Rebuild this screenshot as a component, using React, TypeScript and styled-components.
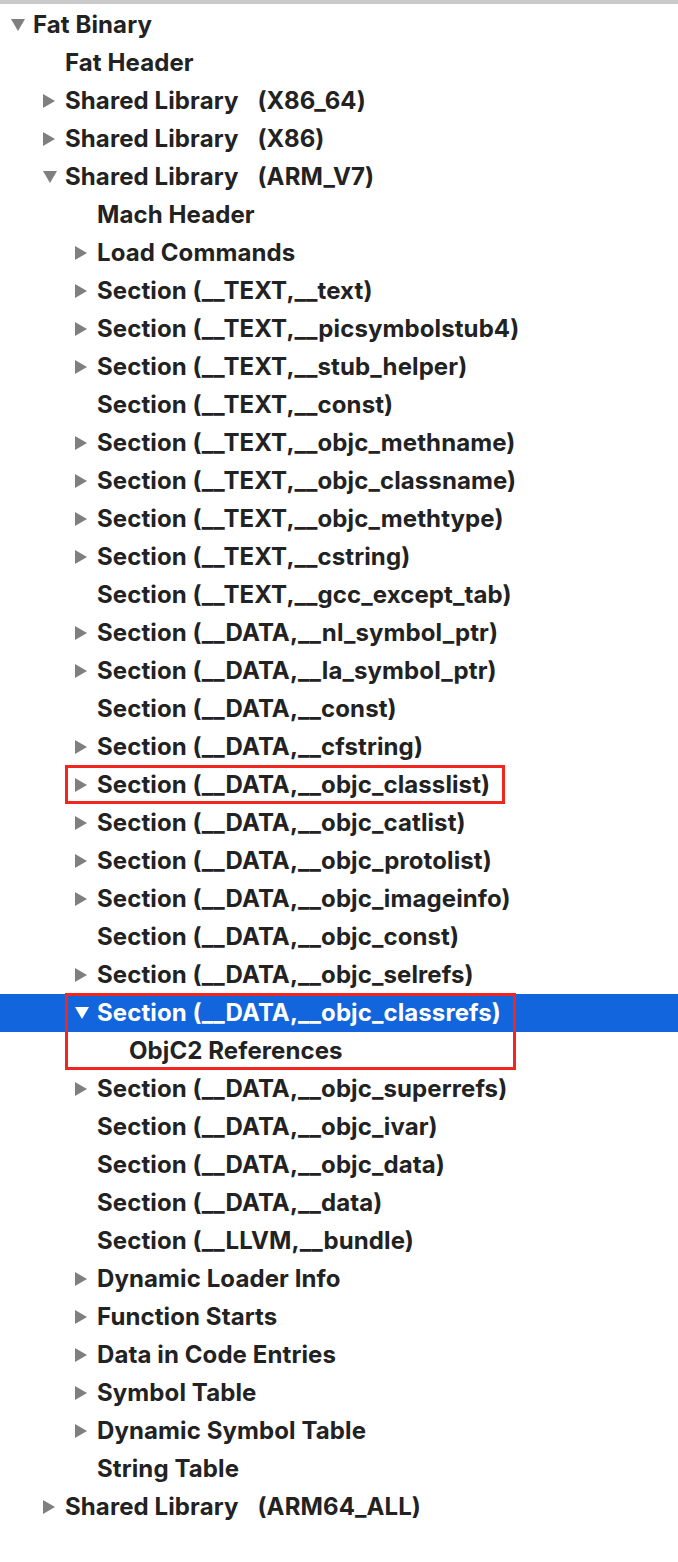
import React from "react";
import styled, { createGlobalStyle } from "styled-components";

const Global = createGlobalStyle`
  html, body { margin: 0; padding: 0; background: #ffffff; }
  body { font-family: "Inter", "Liberation Sans", sans-serif; }
`;

type Arrow = "right" | "down" | null;
type Node = { level: number; arrow: Arrow; label: string; arch?: string; selected?: boolean };

const rows: Node[] = [
  { level: 0, arrow: "down", label: "Fat Binary" },
  { level: 1, arrow: null, label: "Fat Header" },
  { level: 1, arrow: "right", label: "Shared Library", arch: "(X86_64)" },
  { level: 1, arrow: "right", label: "Shared Library", arch: "(X86)" },
  { level: 1, arrow: "down", label: "Shared Library", arch: "(ARM_V7)" },
  { level: 2, arrow: null, label: "Mach Header" },
  { level: 2, arrow: "right", label: "Load Commands" },
  { level: 2, arrow: "right", label: "Section (__TEXT,__text)" },
  { level: 2, arrow: "right", label: "Section (__TEXT,__picsymbolstub4)" },
  { level: 2, arrow: "right", label: "Section (__TEXT,__stub_helper)" },
  { level: 2, arrow: null, label: "Section (__TEXT,__const)" },
  { level: 2, arrow: "right", label: "Section (__TEXT,__objc_methname)" },
  { level: 2, arrow: "right", label: "Section (__TEXT,__objc_classname)" },
  { level: 2, arrow: "right", label: "Section (__TEXT,__objc_methtype)" },
  { level: 2, arrow: "right", label: "Section (__TEXT,__cstring)" },
  { level: 2, arrow: null, label: "Section (__TEXT,__gcc_except_tab)" },
  { level: 2, arrow: "right", label: "Section (__DATA,__nl_symbol_ptr)" },
  { level: 2, arrow: "right", label: "Section (__DATA,__la_symbol_ptr)" },
  { level: 2, arrow: null, label: "Section (__DATA,__const)" },
  { level: 2, arrow: "right", label: "Section (__DATA,__cfstring)" },
  { level: 2, arrow: "right", label: "Section (__DATA,__objc_classlist)" },
  { level: 2, arrow: "right", label: "Section (__DATA,__objc_catlist)" },
  { level: 2, arrow: "right", label: "Section (__DATA,__objc_protolist)" },
  { level: 2, arrow: "right", label: "Section (__DATA,__objc_imageinfo)" },
  { level: 2, arrow: null, label: "Section (__DATA,__objc_const)" },
  { level: 2, arrow: "right", label: "Section (__DATA,__objc_selrefs)" },
  { level: 2, arrow: "down", label: "Section (__DATA,__objc_classrefs)", selected: true },
  { level: 3, arrow: null, label: "ObjC2 References" },
  { level: 2, arrow: "right", label: "Section (__DATA,__objc_superrefs)" },
  { level: 2, arrow: null, label: "Section (__DATA,__objc_ivar)" },
  { level: 2, arrow: null, label: "Section (__DATA,__objc_data)" },
  { level: 2, arrow: null, label: "Section (__DATA,__data)" },
  { level: 2, arrow: null, label: "Section (__LLVM,__bundle)" },
  { level: 2, arrow: "right", label: "Dynamic Loader Info" },
  { level: 2, arrow: "right", label: "Function Starts" },
  { level: 2, arrow: "right", label: "Data in Code Entries" },
  { level: 2, arrow: "right", label: "Symbol Table" },
  { level: 2, arrow: "right", label: "Dynamic Symbol Table" },
  { level: 2, arrow: null, label: "String Table" },
  { level: 1, arrow: "right", label: "Shared Library", arch: "(ARM64_ALL)" },
];

const boxes: { start: number; count: number; width: number }[] = [
  { start: 20, count: 1, width: 440 },
  { start: 26, count: 2, width: 451 },
];

const Page = styled.div`
  width: 678px;
  min-height: 1562px;
  background: #ffffff;
`;

const TopBar = styled.div`
  height: 4px;
  background: #c9c9c9;
`;

const Tree = styled.div`
  padding-top: 2px;
  display: flex;
  flex-direction: column;
`;

const Row = styled.div<{ $level: number; $selected?: boolean }>`
  height: 38px;
  display: flex;
  align-items: center;
  padding-left: ${(p) => 10 + p.$level * 32}px;
  background: ${(p) => (p.$selected ? "#1265dc" : "transparent")};
  color: ${(p) => (p.$selected ? "#ffffff" : "#222222")};
`;

const Disclosure = styled.span`
  width: 23px;
  height: 38px;
  flex: none;
  display: flex;
  align-items: center;
  justify-content: flex-start;
`;

const Label = styled.span`
  font-family: "Inter", "Liberation Sans", sans-serif;
  font-weight: 700;
  font-size: 24px;
  letter-spacing: 0.1px;
  white-space: nowrap;
  line-height: 38px;
`;

const Arch = styled.span`
  margin-left: 19px;
`;

const Group = styled.div`
  position: relative;
`;

const Outline = styled.div<{ $width: number }>`
  position: absolute;
  left: 65px;
  top: -1px;
  bottom: 0;
  width: ${(p) => p.$width}px;
  border: 3px solid #f0261f;
  box-sizing: border-box;
  pointer-events: none;
`;

function Triangle({ dir, selected }: { dir: Arrow; selected?: boolean }) {
  const fill = selected ? "#ffffff" : "#7f7f7f";
  if (dir === "right") {
    return (
      <svg width="14" height="16" viewBox="0 0 14 16">
        <polygon points="1,1 13,8 1,15" fill={fill} />
      </svg>
    );
  }
  if (dir === "down") {
    return (
      <svg width="16" height="14" viewBox="0 0 16 14">
        <polygon points="1,1 15,1 8,13" fill={fill} />
      </svg>
    );
  }
  return null;
}

function TreeRow({ node }: { node: Node }) {
  return (
    <Row $level={node.level} $selected={node.selected}>
      <Disclosure>
        <Triangle dir={node.arrow} selected={node.selected} />
      </Disclosure>
      <Label>
        {node.label}
        {node.arch && <Arch>{node.arch}</Arch>}
      </Label>
    </Row>
  );
}

export default function App() {
  const out: React.ReactNode[] = [];
  let i = 0;
  while (i < rows.length) {
    const box = boxes.find((b) => b.start === i);
    if (box) {
      out.push(
        <Group key={`g${i}`}>
          {rows.slice(i, i + box.count).map((n, k) => (
            <TreeRow key={i + k} node={n} />
          ))}
          <Outline $width={box.width} />
        </Group>
      );
      i += box.count;
    } else {
      out.push(<TreeRow key={i} node={rows[i]} />);
      i += 1;
    }
  }
  return (
    <Page>
      <Global />
      <TopBar />
      <Tree>{out}</Tree>
    </Page>
  );
}
